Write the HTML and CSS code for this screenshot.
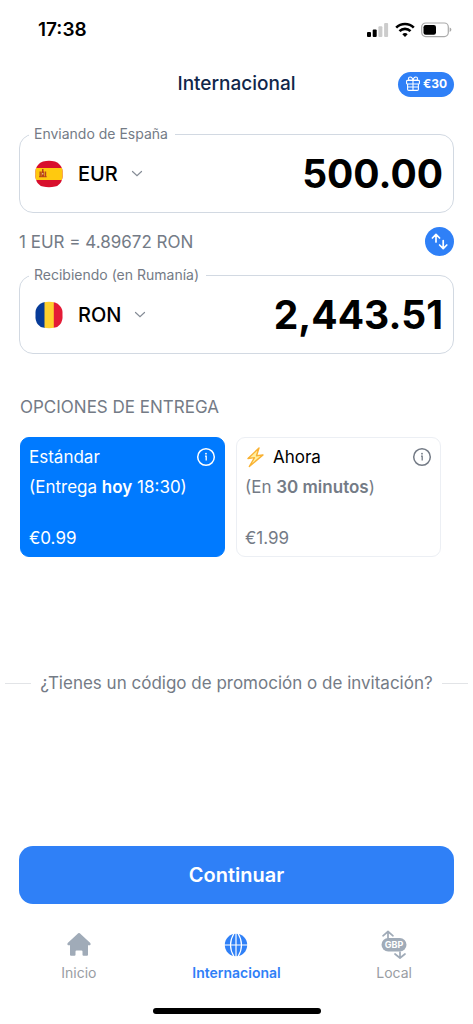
FILE: index.html
```html
<!DOCTYPE html>
<html lang="es">
<head>
<meta charset="utf-8">
<meta name="viewport" content="width=device-width, initial-scale=1">
<title>Internacional</title>
<link rel="stylesheet" href="styles.css">
</head>
<body>
<div class="app">
  <div class="status">
    <span class="status-time">17:38</span>
    <div class="status-icons">
      <svg width="22" height="16" viewBox="0 0 22 16" aria-hidden="true">
        <rect x="0" y="10" width="4" height="5" rx="1"/>
        <rect x="5.7" y="7.5" width="4" height="7.5" rx="1"/>
        <rect x="11.4" y="4.2" width="4" height="10.8" rx="1" fill="#ccc"/>
        <rect x="17.1" y="1" width="4" height="14" rx="1" fill="#ccc"/>
      </svg>
      <svg width="20" height="16" viewBox="0 0 20 16" fill="none" stroke="#000" stroke-width="2.6" aria-hidden="true">
        <path d="M1.2 5.6a12.6 12.6 0 0 1 17.6 0"/>
        <path d="M4.5 9.1a7.8 7.8 0 0 1 11 0"/>
        <path d="M10 15l-2.7-2.8a4 4 0 0 1 5.4 0z" fill="#000" stroke="none"/>
      </svg>
      <svg width="31" height="16" viewBox="0 0 31 16" aria-hidden="true">
        <rect x=".7" y="1" width="26.6" height="13.6" rx="4" fill="none" stroke="#aaa" stroke-width="1.2"/>
        <rect x="2.5" y="3" width="12.5" height="9.8" rx="2.2"/>
        <path d="M28.6 5.6q1.8.6 1.8 2.2t-1.8 2.2z" fill="#aaa"/>
      </svg>
    </div>
  </div>

  <header class="header">
    <h1 class="title">Internacional</h1>
    <button class="reward" type="button">
      <svg width="16" height="16" viewBox="0 0 16 16" fill="none" stroke="#fff" stroke-width="1.1" stroke-linejoin="round" aria-hidden="true">
        <rect x="1.6" y="4.4" width="12.8" height="3.6" rx=".8"/>
        <path d="M2.6 8v5.2q0 1.2 1.2 1.2h8.4q1.2 0 1.2-1.2V8M8 4.4v10M2.6 11h10.8M8 4.4C7.600 2 6.400 1 5.200 1 2.900 1 2.900 4.400 5.200 4.400zM8 4.400C8.400 2 9.600 1 10.800 1c2.300 0 2.300 3.400 0 3.400z"/>
      </svg>
      €30
    </button>
  </header>

  <main class="main">
    <section class="exchange">
      <fieldset class="field">
        <legend class="field-legend">Enviando de España</legend>
        <div class="field-row">
          <svg class="flag" viewBox="0 0 28 28" aria-hidden="true">
            <defs><clipPath id="flag-shape"><path d="M8 1.500Q14 0 20 1.500Q23 2 25 5Q28 8 27.500 14Q28 20 25 23.500Q23 26 20 26.500Q14 28 8 26.500Q5 26 3 23.500Q0 20 .5 14Q0 8 3 5Q5 2 8 1.500Z"/></clipPath></defs>
            <g clip-path="url(#flag-shape)">
              <path fill="#d80f2c" d="M0 0h28v28H0z"/>
              <path fill="#ffc90f" d="M0 8h28v12H0z"/>
              <path fill="#b8431a" d="M4.500 11.500h1.400v5.500H4.500zM9.800 11.500h1.400v5.500H9.800zM6.300 11.500q1.400-1.600 2.900 0v4.700q-1.400 1.600-2.900 0zM7 9h1.500v2.500H7zM4 16.300h7.700v1H4z"/>
              <path fill="#f3d3a0" d="M7.200 13h1.100v1.500H7.200z"/>
            </g>
          </svg>
          <select class="currency" aria-label="Moneda de envío">
            <option selected>EUR</option>
            <option>RON</option>
          </select>
          <svg class="chevron" viewBox="0 0 12 8" aria-hidden="true"><path d="M1.500 1.500L6 5.600l4.500-4.100"/></svg>
          <input class="amount" type="text" inputmode="decimal" value="500.00" aria-label="Importe enviado">
        </div>
      </fieldset>

      <div class="rate">
        <span>1 EUR = 4.89672 RON</span>
        <button class="swap" type="button" aria-label="Intercambiar monedas">
          <svg width="29" height="29" viewBox="0 0 29 29" fill="none" stroke="#fff" stroke-width="1.700" stroke-linecap="round" stroke-linejoin="round" aria-hidden="true">
            <path d="M11 15V7.500M7.400 11L11 7.300l3.600 3.700M18.200 13.500v8M14.600 18l3.600 3.700L21.800 18"/>
          </svg>
        </button>
      </div>

      <fieldset class="field">
        <legend class="field-legend">Recibiendo (en Rumanía)</legend>
        <div class="field-row">
          <svg class="flag" viewBox="0 0 28 28" aria-hidden="true">
            <g clip-path="url(#flag-shape)">
              <path fill="#073b98" d="M0 0h10v28H0z"/>
              <path fill="#ffd02e" d="M9.500 0h9.500v28H9.500z"/>
              <path fill="#e41b36" d="M18.800 0H28v28h-9.200z"/>
            </g>
          </svg>
          <select class="currency" aria-label="Moneda de recepción">
            <option>EUR</option>
            <option selected>RON</option>
          </select>
          <svg class="chevron" viewBox="0 0 12 8" aria-hidden="true"><path d="M1.500 1.500L6 5.600l4.500-4.100"/></svg>
          <input class="amount" type="text" inputmode="decimal" value="2,443.51" aria-label="Importe recibido">
        </div>
      </fieldset>
    </section>

    <section class="delivery">
      <h2 class="delivery-title">OPCIONES DE ENTREGA</h2>
      <div class="options">
        <div class="option">
          <input class="option-input" type="radio" name="delivery" id="standard" checked>
          <label class="option-label" for="standard">
            <span class="option-name">Estándar</span>
            <span class="option-time">(Entrega <b>hoy</b> 18:30)</span>
            <span class="option-price">€0.99</span>
          </label>
          <button class="info" type="button" aria-label="Información sobre Estándar">
            <svg width="20" height="20" viewBox="0 0 20 20" fill="none" stroke="currentColor" aria-hidden="true"><circle cx="10" cy="10" r="8.300" stroke-width="1.500"/><path d="M9 9.200h1.200v4.400" stroke-width="1.300"/><circle cx="10" cy="6.700" r=".9" fill="currentColor" stroke="none"/></svg>
          </button>
        </div>
        <div class="option">
          <input class="option-input" type="radio" name="delivery" id="now">
          <label class="option-label" for="now">
            <span class="option-name">
              <svg class="bolt" viewBox="0 0 20 24" aria-hidden="true"><path d="M14 3L3 13.500l6.500-.9L4.300 21.500 18 9.900l-6.500.9z" fill="#fff0a0" stroke="#f9b233" stroke-width="1.400" stroke-linejoin="round"/></svg>
              Ahora
            </span>
            <span class="option-time">(En <b>30 minutos</b>)</span>
            <span class="option-price">€1.99</span>
          </label>
          <button class="info" type="button" aria-label="Información sobre Ahora">
            <svg width="20" height="20" viewBox="0 0 20 20" fill="none" stroke="currentColor" aria-hidden="true"><circle cx="10" cy="10" r="8.300" stroke-width="1.500"/><path d="M9 9.200h1.200v4.400" stroke-width="1.300"/><circle cx="10" cy="6.700" r=".9" fill="currentColor" stroke="none"/></svg>
          </button>
        </div>
      </div>
    </section>

    <button class="promo" type="button">¿Tienes un código de promoción o de invitación?</button>
  </main>

  <footer class="footer">
    <button class="continue" type="button">Continuar</button>
    <nav class="tabs">
      <a class="tab" href="#inicio">
        <svg width="32" height="32" viewBox="0 0 32 32" fill="#a0abb8" aria-hidden="true"><path d="M15.200 4.300q.8-.7 1.600 0L27.300 14q1 1.200-.3 2.200h-2v9.600q0 1-1 1h-3.500q-1 0-1-1v-3.300q0-1-1-1h-5q-1 0-1 1v3.300q0 1-1 1H8q-1 0-1-1v-9.600H5q-1.300-1-.3-2.200z"/></svg>
        Inicio
      </a>
      <a class="tab tab-active" href="#internacional" aria-current="page">
        <svg width="32" height="32" viewBox="0 0 32 32" aria-hidden="true"><circle cx="16" cy="16" r="11.200" fill="#2f80f7"/><path d="M4 16h24M16 4v24M14 4.500Q10.500 10 10.500 16t3.500 11.500M18 4.500q3.500 5.500 3.500 11.500T18 27.500" fill="none" stroke="#fff" stroke-width="1.200"/></svg>
        Internacional
      </a>
      <a class="tab" href="#local">
        <svg width="32" height="32" viewBox="0 0 32 32" aria-hidden="true"><rect x="3.500" y="9" width="25" height="13.500" rx="6.700" fill="#a0abb8"/><path d="M10 9V3M5 6.800L10 2.500l5 4.300M22 23v5.800M17 25l5 4 5-4" fill="none" stroke="#a0abb8" stroke-width="1.700" stroke-linecap="round" stroke-linejoin="round"/><text class="tab-currency" x="16" y="19">GBP</text></svg>
        Local
      </a>
    </nav>
    <div class="home-bar"></div>
  </footer>
</div>
</body>
</html>
```
FILE: styles.css
```css
*, *::before, *::after {
  box-sizing: border-box;
}

body {
  margin: 0;
  background: #fff;
  color: #000;
  font-family: Inter, "Liberation Sans", sans-serif;
  font-size: 18px;
  line-height: 24px;
}

button, input, select {
  margin: 0;
  padding: 0;
  border: 0;
  background: none;
  color: inherit;
  font: inherit;
}

button {
  cursor: pointer;
}

svg {
  display: block;
  flex: none;
}

.app {
  display: flex;
  flex-direction: column;
  min-height: 100vh;
}

.status {
  display: flex;
  align-items: center;
  justify-content: space-between;
  height: 60px;
  padding: 0 21px 0 38px;
}

.status-time {
  font-size: 19px;
  font-weight: 600;
}

.status-icons {
  display: flex;
  align-items: center;
  gap: 6px;
}

.header {
  display: grid;
  grid-template-columns: 1fr auto 1fr;
  align-items: center;
  height: 48px;
  padding: 0 19px;
}

.title {
  grid-column: 2;
  margin: 0;
  color: #10264a;
  font-size: 19px;
  font-weight: 500;
}

.reward {
  display: flex;
  align-items: center;
  justify-content: center;
  justify-self: end;
  gap: 2px;
  height: 25px;
  padding: 0 7px;
  border-radius: 13px;
  background: #2f80f7;
  color: #fff;
  font-size: 12px;
  font-weight: 700;
}

.main {
  flex: 1;
}

.exchange {
  padding: 17px 19px 0;
}

.field {
  min-width: 0;
  margin: 0;
  padding: 0 10px 7px 9px;
  border: 1px solid #d2d9e2;
  border-radius: 14px;
}

.field-legend {
  padding: 0 7px 0 5px;
  color: #747b86;
  font-size: 14px;
  line-height: 18px;
}

.field-row {
  display: flex;
  align-items: center;
  height: 62px;
  padding-left: 6px;
}

.flag {
  width: 28px;
  height: 28px;
}

.currency {
  flex: none;
  field-sizing: content;
  margin: 0 13px 0 15px;
  appearance: none;
  font-size: 20px;
  font-weight: 500;
}

.chevron {
  width: 12px;
  height: 8px;
  fill: none;
  stroke: #858c96;
  stroke-width: 1.2;
  stroke-linecap: round;
}

.amount {
  flex: 1;
  min-width: 0;
  font-size: 39px;
  font-weight: 700;
  line-height: 48px;
  text-align: right;
}

.rate {
  display: flex;
  align-items: center;
  justify-content: space-between;
  padding: 14px 0 10px;
  color: #747b86;
  font-size: 17px;
}

.swap {
  width: 29px;
  height: 29px;
  border-radius: 50%;
  background: #2f80f7;
}

.delivery {
  padding: 41px 32px 0 20px;
}

.delivery-title {
  margin: 0 0 18px;
  color: #747b86;
  font-size: 17px;
  font-weight: 400;
}

.options {
  display: grid;
  grid-template-columns: 1fr 1fr;
  gap: 11px;
}

.option {
  display: flex;
  align-items: flex-start;
  position: relative;
  padding: 7px 8px 6px;
  border: 1px solid #eceff4;
  border-radius: 9px;
  color: #747b86;
}

.option:has(.option-input:checked) {
  border-color: #007aff;
  background: #007aff;
  color: #fff;
}

.option-input {
  position: absolute;
  opacity: 0;
  pointer-events: none;
}

.option-label {
  display: flex;
  flex: 1;
  flex-direction: column;
  gap: 6px;
  margin-right: -20px;
  font-size: 17px;
  cursor: pointer;
}

.option-name {
  display: flex;
  align-items: center;
  gap: 8px;
  color: #000;
}

.option-input:checked + .option-label .option-name {
  color: #fff;
}

.option-label b {
  font-weight: 600;
}

.option-price {
  margin-top: 21px;
}

.bolt {
  width: 20px;
  height: 24px;
}

.info {
  z-index: 1;
  padding: 2px 0;
}

.promo {
  display: flex;
  align-items: center;
  gap: 9px;
  width: 100%;
  margin-top: 114px;
  padding: 0 5px;
  color: #747b86;
  font-size: 17px;
}

.promo::before, .promo::after {
  content: "";
  flex: 1;
  height: 1px;
  background: #e2e4e7;
}

.continue {
  display: block;
  width: calc(100% - 38px);
  height: 58px;
  margin: 0 19px;
  border-radius: 14px;
  background: #2f80f7;
  color: #fff;
  font-size: 20px;
  font-weight: 600;
}

.tabs {
  display: grid;
  grid-template-columns: repeat(3, 1fr);
  padding: 25px 0;
}

.tab {
  display: flex;
  flex-direction: column;
  align-items: center;
  gap: 2px;
  color: #999da3;
  font-size: 14px;
  line-height: 20px;
  text-decoration: none;
}

.tab-active {
  color: #2f80f7;
  font-weight: 600;
}

.tab-currency {
  fill: #fff;
  font-size: 9px;
  font-weight: 700;
  text-anchor: middle;
}

.home-bar {
  width: 168px;
  height: 6px;
  margin: 0 auto 10px;
  border-radius: 3px;
  background: #000;
}
```
